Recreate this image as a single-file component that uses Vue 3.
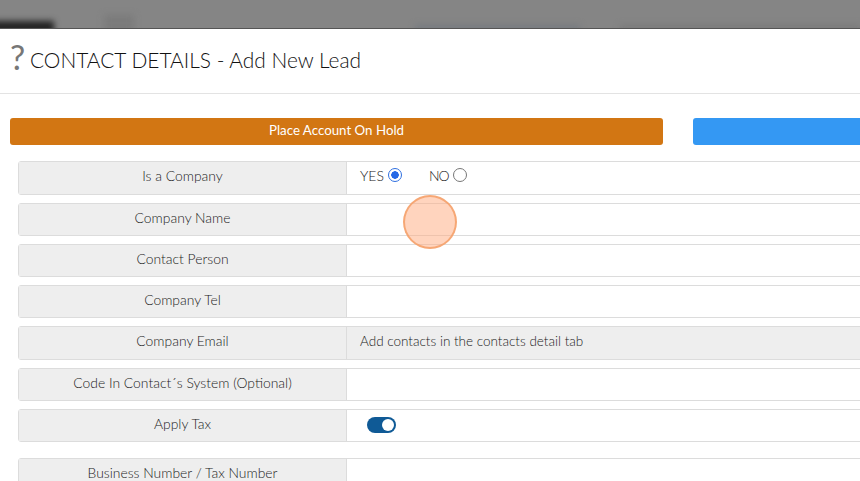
<script setup>
const rows = [
  { label: 'Is a Company', kind: 'radio', h: 34, gap: 8 },
  { label: 'Company Name', kind: 'input', h: 33, gap: 8 },
  { label: 'Contact Person', kind: 'input', h: 33, gap: 8 },
  { label: 'Company Tel', kind: 'input', h: 33, gap: 8 },
  { label: 'Company Email', kind: 'note', h: 34, gap: 8 },
  { label: 'Code In Contact´s System (Optional)', kind: 'input', h: 33, gap: 8 },
  { label: 'Apply Tax', kind: 'toggle', h: 33, gap: 16 },
  { label: 'Business Number / Tax Number', kind: 'input', h: 33, gap: 0 },
]
</script>

<template>
  <div class="page">
    <div class="backdrop">
      <span class="blur dark"></span>
      <span class="blur mid"></span>
      <span class="blur line"></span>
      <span class="blur tail"></span>
    </div>
    <header class="head">
      <span class="help">?</span>
      <h1 class="title">CONTACT DETAILS - Add New Lead</h1>
    </header>
    <div class="actions">
      <button class="btn hold">Place Account On Hold</button>
      <button class="btn blue"></button>
    </div>
    <div class="form">
      <div v-for="r in rows" :key="r.label" class="row" :style="{ height: r.h + 'px', marginBottom: r.gap + 'px' }">
        <div class="label">{{ r.label }}</div>
        <div class="value" :class="{ grey: r.kind === 'note' }">
          <template v-if="r.kind === 'radio'">
            <span class="opt">YES</span><span class="radio on"></span>
            <span class="opt no">NO</span><span class="radio"></span>
          </template>
          <span v-else-if="r.kind === 'note'" class="note">Add contacts in the contacts detail tab</span>
          <span v-else-if="r.kind === 'toggle'" class="toggle"><i></i></span>
        </div>
      </div>
    </div>
    <span class="click"></span>
  </div>
</template>

<style scoped>
.page {
  position: relative;
  width: 860px;
  height: 481px;
  overflow: hidden;
  background: #fff;
  font-family: Lato, "Liberation Sans", sans-serif;
  color: #444;
}
.backdrop {
  position: relative;
  height: 29px;
  background: #858585;
  border-bottom: 1px solid #555;
  box-sizing: border-box;
  overflow: hidden;
}
.blur { position: absolute; filter: blur(3px); }
.dark { left: -8px; top: 21px; width: 62px; height: 12px; background: #222; }
.mid { left: 104px; top: 15px; width: 30px; height: 16px; background: #7b7b7b; }
.line { left: 415px; top: 25px; width: 165px; height: 6px; background: #757a80; }
.tail { left: 620px; top: 25px; width: 240px; height: 6px; background: #7a7a7a; }
.head {
  display: flex;
  align-items: center;
  height: 65px;
  box-sizing: border-box;
  padding: 0 0 4px 10px;
  border-bottom: 1px solid #e3e3e3;
}
.help { font-size: 34px; font-weight: 400; color: #777; line-height: 1; width: 20px; margin-top: -4px; }
.title { margin: 0; font-size: 20.9px; font-weight: 300; color: #111; white-space: nowrap; }
.actions {
  display: flex;
  gap: 30px;
  padding: 24px 0 0 10px;
  width: 1000px;
}
.btn {
  height: 27px;
  border: 0;
  border-radius: 3px;
  color: #fff;
  font: 400 13.3px Lato, sans-serif;
  padding: 0 0 3px;
}
.hold { width: 653px; background: #d27613; }
.blue { width: 300px; background: #3498f3; }
.form { padding: 16px 0 0 18px; width: 1000px; }
.row {
  display: flex;
  box-sizing: border-box;
  border: 1px solid #dcdcdc;
  border-radius: 3px;
}
.label {
  flex: none;
  width: 328px;
  background: #eee;
  border-right: 1px solid #dcdcdc;
  display: flex;
  align-items: center;
  justify-content: center;
  font-size: 13.9px;
  font-weight: 300;
  color: #222;
  padding-bottom: 5px;
  box-sizing: border-box;
}
.row:first-child .label { padding-bottom: 6px; }
.value {
  flex: 1;
  display: flex;
  align-items: center;
  padding-left: 13px;
  padding-bottom: 5px;
  font-size: 14px;
  font-weight: 300;
  color: #222;
}
.row:first-child .value { padding-bottom: 6px; }
.value.grey { background: #eee; }
.note { font-size: 13.5px; }
.opt.no { margin-left: 27px; letter-spacing: -1px; }
.radio {
  width: 14px;
  height: 14px;
  border: 1px solid #777;
  border-radius: 50%;
  box-sizing: border-box;
  margin: -1px 0 0 4px;
  background: #fff;
}
.radio.on { border-color: #2f6fe0; background: radial-gradient(circle, #2467e6 0 3.5px, #fff 4px); }
.toggle {
  position: relative;
  width: 29px;
  height: 16px;
  margin: 3px 0 0 7px;
  border-radius: 8px;
  background: #0f5a96;
}
.toggle i {
  position: absolute;
  right: 2px;
  top: 2px;
  width: 12px;
  height: 12px;
  border-radius: 50%;
  background: #fff;
}
.click {
  position: absolute;
  left: 403px;
  top: 195px;
  width: 54px;
  height: 54px;
  box-sizing: border-box;
  border-radius: 50%;
  background: rgba(255, 170, 125, 0.5);
  border: 2px solid rgba(245, 160, 105, 0.85);
}
</style>
